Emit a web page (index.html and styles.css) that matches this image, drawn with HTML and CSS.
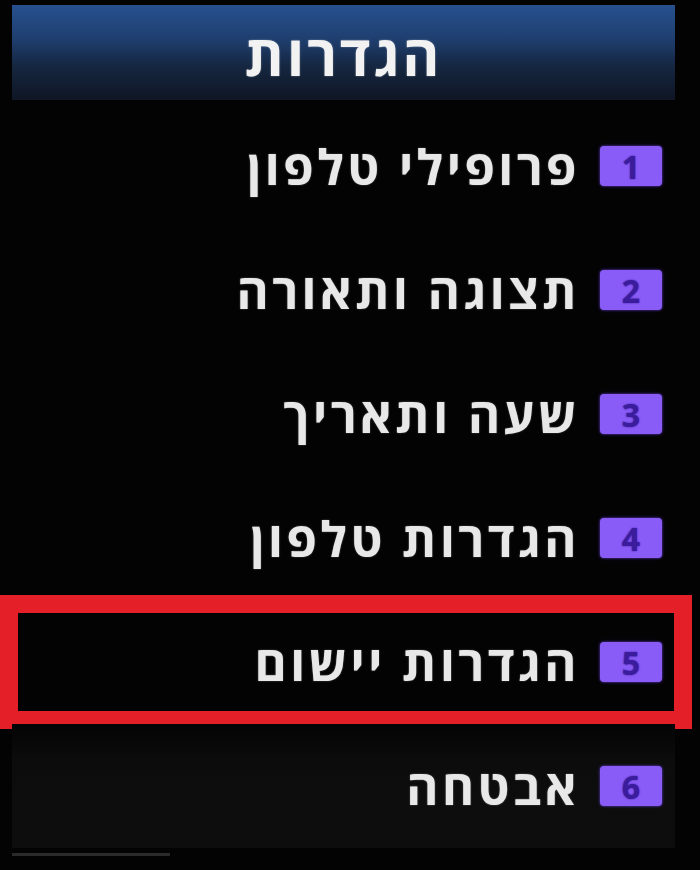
FILE: index.html
```html
<!DOCTYPE html>
<html lang="he" dir="rtl">
<head>
<meta charset="utf-8">
<link rel="stylesheet" href="styles.css">
</head>
<body>
<div class="screen">
  <div class="header"><span class="title">הגדרות</span></div>
  <ul class="menu">
    <li class="row"><span class="badge">1</span><span class="label">פרופילי טלפון</span></li>
    <li class="row"><span class="badge">2</span><span class="label">תצוגה ותאורה</span></li>
    <li class="row"><span class="badge">3</span><span class="label">שעה ותאריך</span></li>
    <li class="row"><span class="badge">4</span><span class="label">הגדרות טלפון</span></li>
    <li class="row selected"><span class="badge">5</span><span class="label">הגדרות יישום</span></li>
    <li class="row last"><span class="badge">6</span><span class="label">אבטחה</span></li>
  </ul>
  <div class="footer-line"></div>
</div>
</body>
</html>
```
FILE: styles.css
```css
html, body {
  margin: 0;
  padding: 0;
  background: #020202;
}
.screen {
  width: 700px;
  height: 870px;
  overflow: hidden;
  background: #030303;
  font-family: "Open Sans", "Liberation Sans", sans-serif;
  direction: rtl;
  display: flex;
  flex-direction: column;
}
.header {
  margin: 5px 25px 0 12px;
  height: 95px;
  background: linear-gradient(180deg, #27508f 0%, #1f3f70 35%, #152640 65%, #0f1624 100%);
  display: flex;
  align-items: center;
  justify-content: center;
}
.title {
  color: #f2f2f2;
  font-weight: bold;
  font-size: 56px;
  letter-spacing: 3px;
  margin-top: 2px;
  text-shadow: 0 0 2px rgba(255,255,255,0.4);
}
.menu {
  list-style: none;
  margin: 4px 8px 0 0;
  padding: 0;
  width: 692px;
  display: flex;
  flex-direction: column;
}
.row {
  height: 124px;
  box-sizing: border-box;
  display: flex;
  align-items: center;
  gap: 20px;
  padding-right: 30px;
}
.row.selected {
  height: 134px;
  margin: -5px 0;
  border: 18px solid #e51f27;
  padding-right: 12px;
}
.row.last {
  background: linear-gradient(180deg, #040404 0%, #0b0c0b 30%, #0c0d0c 100%);
  margin-left: 12px;
  margin-right: 17px;
  padding-right: 13px;
  width: 663px;
}
.badge {
  width: 62px;
  height: 40px;
  flex: none;
  border-radius: 4px;
  background: #8a5cf7;
  box-shadow: 0 0 3px #6a40e0;
  color: #3a1c9c;
  font-weight: bold;
  font-size: 32px;
  display: flex;
  align-items: center;
  justify-content: center;
  text-shadow: 0 0 2px #3a1c9c;
}
.label {
  color: #e8e8e8;
  font-weight: bold;
  font-size: 49px;
  letter-spacing: 3.5px;
  text-shadow: 0 0 2px rgba(255,255,255,0.35);
}
.footer-line {
  margin: 5px 530px 0 12px;
  height: 3px;
  background: #2a2a2a;
}
```
